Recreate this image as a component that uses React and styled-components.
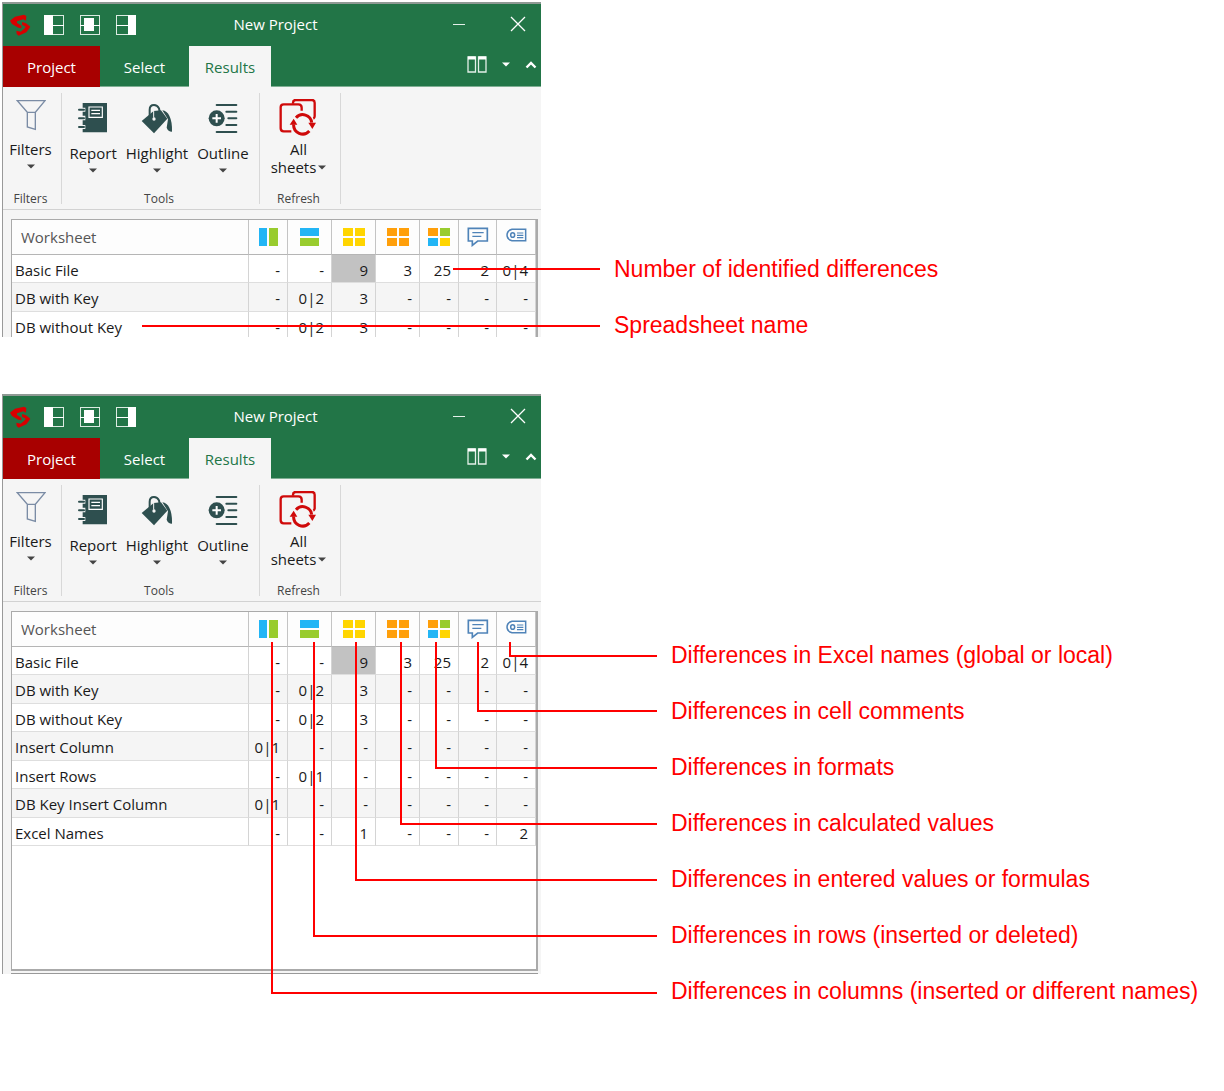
import React from 'react'
import styled, { createGlobalStyle } from 'styled-components'

const KINDS = ['columns', 'rows', 'entered values', 'calculated values', 'formats', 'comments', 'names']

const SHEETS = [
  { name: 'Basic File', values: ['-', '-', '9', '3', '25', '2', '0|4'], selected: 2 },
  { name: 'DB with Key', values: ['-', '0|2', '3', '-', '-', '-', '-'] },
  { name: 'DB without Key', values: ['-', '0|2', '3', '-', '-', '-', '-'] },
  { name: 'Insert Column', values: ['0|1', '-', '-', '-', '-', '-', '-'] },
  { name: 'Insert Rows', values: ['-', '0|1', '-', '-', '-', '-', '-'] },
  { name: 'DB Key Insert Column', values: ['0|1', '-', '-', '-', '-', '-', '-'] },
  { name: 'Excel Names', values: ['-', '-', '1', '-', '-', '-', '2'] }
]

const OVERVIEW = {
  labels: ['Number of identified differences', 'Spreadsheet name'],
  lines: ['M451 267H598', 'M140 324H598']
}

const DETAILS = {
  labels: [
    'Differences in Excel names (global or local)',
    'Differences in cell comments',
    'Differences in formats',
    'Differences in calculated values',
    'Differences in entered values or formulas',
    'Differences in rows (inserted or deleted)',
    'Differences in columns (inserted or different names)'
  ],
  lines: [
    'M508 248V262H655',
    'M476 248V317H655',
    'M434 248V374H655',
    'M399 248V430H655',
    'M354 248V486H655',
    'M312 248V542H655',
    'M270 248V599H655'
  ]
}

// icons

const Logo = () => (
  <svg width="21" height="22" viewBox="30 42 63 66" fill="#d80000">
    <path d="M30 62L45 50L72 44L79 48L78 62L70 58L51 64L51 69L64 77L64 85L55 83L36 72Z" />
    <path d="M66 66L78 70L91 80L88 85L79 97L56 107L50 102L49 92L62 95L72 87L77 80L66 74Z" />
  </svg>
)

const PaneIcon = ({ side }) => (
  <svg width="20" height="20" fill="#fff">
    <rect x="0.5" y="0.5" width="19" height="19" fill="none" stroke="#dcebe2" />
    {side === 'left' && <path d="M0 0H9V20H0ZM9 10H20V11H9Z" />}
    {side === 'center' && <path d="M4 3H14V16H4ZM0 10H20V11H0Z" />}
    {side === 'right' && <path d="M12 0H20V20H12ZM0 10H12V11H0Z" />}
  </svg>
)

const MinimizeIcon = () => (
  <svg width="14" height="14" stroke="#e4f0e9"><path d="M1 7.500H13" /></svg>
)

const CloseIcon = () => (
  <svg width="16" height="16" stroke="#fff" strokeWidth="1.3"><path d="M1 1L15 15M15 1L1 15" /></svg>
)

const SplitIcon = () => (
  <svg width="20" height="18" fill="none" stroke="#e4f0e9" strokeWidth="1.3">
    <path d="M1 1H8.500V16H1ZM11.500 1H19V16H11.500Z" />
    <path d="M1 2H8.500M11.500 2H19" stroke="#fff" strokeWidth="3" />
  </svg>
)

const ChevronIcon = () => (
  <svg width="12" height="9" fill="none" stroke="#fff" strokeWidth="2.4"><path d="M1.500 7.500L6 3L10.500 7.500" /></svg>
)

const Arrow = ({ color = '#444' }) => (
  <svg width="8" height="5" fill={color}><path d="M0 0.500H8L4 4.500Z" /></svg>
)

const FunnelIcon = () => (
  <svg width="30" height="32" viewBox="48 42 90 96" fill="none" stroke="#7b8ca5" strokeWidth="4">
    <path d="M52 47H135L106 82V133L82 126V82ZM82 82H106" />
  </svg>
)

const ReportIcon = () => (
  <svg width="30" height="30" viewBox="238 56 90 90">
    <path d="M252 56H325V144H252V134H260V122H252V108H260V94H252V82H260V70H252Z" fill="#2e4f4f" />
    <path d="M241 76H256M241 102H256M241 128H256" stroke="#2e4f4f" strokeWidth="6" strokeLinecap="round" />
    <path d="M271 68H311V99H271Z" fill="#2e4f4f" stroke="#fff" strokeWidth="3.500" />
    <path d="M278 78H304M278 88H304" stroke="#fff" strokeWidth="4" />
  </svg>
)

const BucketIcon = () => (
  <svg width="32" height="31" viewBox="424 54 96 93">
    <path d="M462 78L484 76L503 101L463 145L426 108Z" fill="#2e4f4f" />
    <path d="M450 98V74Q450 60 463 60Q473 60 478 70L482 92" fill="none" stroke="#2e4f4f" strokeWidth="6" />
    <path d="M462 78V98" stroke="#f5f5f5" strokeWidth="3" />
    <circle cx="463" cy="102" r="5" fill="#f5f5f5" />
    <path d="M488 76Q502 78 509 92Q518 110 517 140Q505 140 501 128L505 103Z" fill="#2e4f4f" />
  </svg>
)

const OutlineIcon = () => (
  <svg width="30" height="31" viewBox="624 54 90 93" fill="none" stroke="#2e4f4f" strokeWidth="6" strokeLinecap="round">
    <path d="M650 60H709M679 80H709M685 100H709M679 120H709M650 141H709" />
    <circle cx="650" cy="100" r="24" fill="#2e4f4f" stroke="none" />
    <path d="M650 87V113M637 100H663" stroke="#fff" strokeWidth="6" strokeLinecap="butt" />
  </svg>
)

const SheetsIcon = () => (
  <svg width="38" height="38" viewBox="100 42 114 114" fill="none" stroke="#cf0a0a" strokeWidth="7">
    <path d="M137 139H114Q105 139 105 130V67Q105 58 114 58H158Q168 58 168 68V77" />
    <path d="M142 56V53Q142 45 150 45H199Q207 45 207 53V94Q207 99 203 101" />
    <path d="M151 98A27 27 0 0 1 198 113M191 138A27 27 0 0 1 144 118" strokeWidth="9" />
    <path d="M188 113H211L200 132ZM132 119H155L144 101Z" fill="#cf0a0a" stroke="none" />
  </svg>
)

const SWATCHES = {
  'entered values': ['#ffd500', '#ffd500', '#ffd500', '#ffd500'],
  'calculated values': ['#ff9f0a', '#ff9f0a', '#ff9f0a', '#ff9f0a'],
  formats: ['#ff9f0a', '#99cc2e', '#22b5f5', '#ffd500']
}

const KindIcon = ({ kind }) => {
  if (kind === 'columns') {
    return (
      <svg width="19" height="18" role="img" aria-label={kind}>
        <path d="M0 0H8V18H0Z" fill="#22b5f5" />
        <path d="M10 0H19V18H10Z" fill="#99cc2e" />
      </svg>
    )
  }
  if (kind === 'rows') {
    return (
      <svg width="19" height="18" role="img" aria-label={kind}>
        <path d="M0 0H19V8H0Z" fill="#22b5f5" />
        <path d="M0 10H19V18H0Z" fill="#99cc2e" />
      </svg>
    )
  }
  if (kind === 'comments') {
    return (
      <svg width="22" height="20" viewBox="0 0 66 60" fill="none" stroke="#4f83b8" strokeWidth="5" role="img" aria-label={kind}>
        <path d="M4 4H61V42H32L16 55V42H4Z" />
        <path d="M16 17H50M16 28H43" strokeWidth="4" />
      </svg>
    )
  }
  if (kind === 'names') {
    return (
      <svg width="21" height="18" viewBox="0 0 63 54" fill="none" stroke="#4f83b8" strokeWidth="4.500" role="img" aria-label={kind}>
        <path d="M18 4H59V38H18Q3 34 3 21Q3 8 18 4Z" />
        <ellipse cx="20" cy="21" rx="6" ry="7" />
        <path d="M33 15H52M33 22H52M33 29H52" strokeWidth="3.500" />
      </svg>
    )
  }
  const [a, b, c, d] = SWATCHES[kind]
  return (
    <svg width="22" height="18" role="img" aria-label={kind}>
      <path d="M0 0H10V8H0Z" fill={a} />
      <path d="M12 0H22V8H12Z" fill={b} />
      <path d="M0 10H10V18H0Z" fill={c} />
      <path d="M12 10H22V18H12Z" fill={d} />
    </svg>
  )
}

// parts of the program window

const TitleBar = () => (
  <Title>
    <QuickAccess>
      <Logo />
      <IconButton aria-label="Left pane"><PaneIcon side="left" /></IconButton>
      <IconButton aria-label="Center pane"><PaneIcon side="center" /></IconButton>
      <IconButton aria-label="Right pane"><PaneIcon side="right" /></IconButton>
    </QuickAccess>
    <span>New Project</span>
    <WindowButtons>
      <WindowButton aria-label="Minimize"><MinimizeIcon /></WindowButton>
      <WindowButton aria-label="Close"><CloseIcon /></WindowButton>
    </WindowButtons>
  </Title>
)

const TabBar = () => (
  <Tabs>
    <ProjectTab>Project</ProjectTab>
    <Tab>Select</Tab>
    <ActiveTab>Results</ActiveTab>
    <TabTools>
      <IconButton aria-label="Arrange windows"><SplitIcon /></IconButton>
      <IconButton aria-label="More"><Arrow color="#fff" /></IconButton>
      <IconButton aria-label="Collapse ribbon"><ChevronIcon /></IconButton>
    </TabTools>
  </Tabs>
)

const RibbonBar = () => (
  <Ribbon>
    <Group $width="59px">
      <Tools>
        <Tool><LargeIcon><FunnelIcon /></LargeIcon>Filters<Arrow /></Tool>
      </Tools>
      <GroupName>Filters</GroupName>
    </Group>
    <Group $width="198px">
      <Tools>
        <Tool><SmallIcon><ReportIcon /></SmallIcon>Report<Arrow /></Tool>
        <Tool><SmallIcon><BucketIcon /></SmallIcon>Highlight<Arrow /></Tool>
        <Tool><SmallIcon><OutlineIcon /></SmallIcon>Outline<Arrow /></Tool>
      </Tools>
      <GroupName>Tools</GroupName>
    </Group>
    <Group $width="81px">
      <Tools>
        <Tool>
          <LargeIcon><SheetsIcon /></LargeIcon>
          All
          <Inline>sheets<Arrow /></Inline>
        </Tool>
      </Tools>
      <GroupName>Refresh</GroupName>
    </Group>
  </Ribbon>
)

const Results = ({ sheets }) => (
  <Table>
    <colgroup>
      <col />
      <Col $width="39px" />
      <Col $width="44px" />
      <Col $width="44px" />
      <Col $width="44px" />
      <Col $width="39px" />
      <Col $width="38px" />
      <Col $width="39px" />
    </colgroup>
    <thead>
      <tr>
        <NameHead>Worksheet</NameHead>
        {KINDS.map(kind => <Head key={kind}><KindIcon kind={kind} /></Head>)}
      </tr>
    </thead>
    <tbody>
      {sheets.map(sheet => (
        <Row key={sheet.name}>
          <Name>{sheet.name}</Name>
          {sheet.values.map((value, i) => (
            <Value key={i} $selected={sheet.selected === i}>{value}</Value>
          ))}
        </Row>
      ))}
    </tbody>
  </Table>
)

const Figure = ({ labels, lines, cropped, indent, top }) => (
  <FigureBox>
    <Window $cropped={cropped}>
      <TitleBar />
      <TabBar />
      <RibbonBar />
      <Body>
        <Pane>
          <Sheet>
            <Results sheets={cropped ? SHEETS.slice(0, 3) : SHEETS} />
          </Sheet>
        </Pane>
      </Body>
    </Window>
    <Labels $indent={indent} $top={top}>
      {labels.map(label => <Label key={label}>{label}</Label>)}
    </Labels>
    <Lines>
      {lines.map(d => <path key={d} d={d} />)}
    </Lines>
  </FigureBox>
)

const App = () => (
  <Page>
    <GlobalStyle />
    <Figure {...OVERVIEW} cropped indent="73px" top="239px" />
    <Figure {...DETAILS} indent="130px" top="233px" />
  </Page>
)

const GlobalStyle = createGlobalStyle`
  * {
    box-sizing: border-box;
  }

  body {
    margin: 0;
    background: #fff;
  }

  svg {
    display: block;
    flex: none;
  }
`

const Page = styled.main`
  display: flex;
  flex-direction: column;
  gap: 41px;
  padding: 2px 0 0 2px;
`

const FigureBox = styled.section`
  position: relative;
  display: flex;
  align-items: flex-start;
`

const Window = styled.div`
  flex: 0 0 539px;
  height: ${props => props.$cropped ? '335px' : 'auto'};
  overflow: hidden;
  border-top: 2px solid #8f9a94;
  border-left: 1px solid #999;
  background: #f5f5f5;
  color: #1a1a1a;
  font-family: 'Open Sans', 'Noto Sans', sans-serif;
  font-size: 15px;
  line-height: 18px;
`

const Title = styled.header`
  display: grid;
  grid-template-columns: 1fr auto 1fr;
  align-items: center;
  height: 42px;
  padding: 0 0 3px 7px;
  background: #227547;
  color: #fff;
`

const QuickAccess = styled.div`
  display: flex;
  align-items: center;
  gap: 16px;
  padding-top: 2px;

  > svg {
    margin-right: -3px;
  }
`

const IconButton = styled.button`
  display: flex;
  padding: 0;
  border: 0;
  background: none;
`

const WindowButtons = styled.div`
  display: flex;
  align-items: center;
  justify-content: flex-end;
  gap: 13px;
`

const WindowButton = styled(IconButton)`
  justify-content: center;
  width: 46px;
`

const Tabs = styled.nav`
  display: flex;
  height: 41px;
  background: #227547;
`

const Tab = styled.button`
  width: 89px;
  padding: 2px 0 0;
  border: 0;
  border-bottom: 1px solid #7fae93;
  background: none;
  color: #fff;
  font: inherit;
`

const ProjectTab = styled(Tab)`
  width: 97px;
  border-color: #a80000;
  background: #a80000;
`

const ActiveTab = styled(Tab)`
  width: 82px;
  border-color: #f5f5f5;
  background: #f5f5f5;
  color: #227547;
`

const TabTools = styled.div`
  display: flex;
  flex: 1;
  align-items: center;
  justify-content: flex-end;
  gap: 15px;
  padding: 0 4px 3px 0;
  border-bottom: 1px solid #7fae93;
`

const Ribbon = styled.div`
  display: flex;
  height: 123px;
  padding: 6px 0 5px;
  border-bottom: 1px solid #d2d2d2;
`

const Group = styled.div`
  display: flex;
  flex-direction: column;
  justify-content: space-between;
  width: ${props => props.$width};
  padding-right: 3px;
  border-right: 1px solid #d8d8d8;
`

const Tools = styled.div`
  display: flex;
  justify-content: center;
  gap: 9px;
`

const Tool = styled.button`
  display: flex;
  flex-direction: column;
  align-items: center;
  padding: 6px 0 0;
  border: 0;
  background: none;
  color: inherit;
  font: inherit;

  > svg {
    margin-top: 6px;
  }
`

const LargeIcon = styled.span`
  display: flex;
  height: 41px;
`

const SmallIcon = styled.span`
  display: flex;
  height: 45px;
  padding-top: 4px;
`

const Inline = styled.span`
  display: flex;
  align-items: center;
  gap: 2px;
`

const GroupName = styled.span`
  color: #444;
  font-size: 12px;
  line-height: 10px;
  text-align: center;
`

const Body = styled.div`
  padding: 9px 3px 0 8px;
`

const Pane = styled.div`
  padding-bottom: 2px;
  border-bottom: 1px solid #999;
`

const Sheet = styled.div`
  min-height: 360px;
  border: 1px solid #aaa;
  border-width: 1px 2px 2px 1px;
  background: #fff;
`

const Table = styled.table`
  width: 100%;
  border-spacing: 0;
  table-layout: fixed;
`

const Col = styled.col`
  width: ${props => props.$width};
`

const Head = styled.th`
  height: 35px;
  padding: 0;
  border-right: 1px solid #c4c4c4;
  border-bottom: 1px solid #b5b5b5;
  background: #fdfdfd;

  svg {
    margin: 0 auto;
  }
`

const NameHead = styled(Head)`
  padding-left: 9px;
  color: #555;
  font-weight: 400;
  text-align: left;
`

const Row = styled.tr`
  height: 28px;

  &:nth-child(even) {
    height: 29px;
    background: #f5f5f5;
  }
`

const Name = styled.td`
  padding: 2px 0 0 3px;
  border-right: 1px solid #d4d4d4;
  border-bottom: 1px solid #dedede;
`

const Value = styled(Name)`
  padding: 2px 7px 0 0;
  background: ${props => props.$selected ? '#c2c2c2' : 'none'};
  text-align: right;
`

const Labels = styled.ul`
  margin: ${props => props.$top} 0 0 ${props => props.$indent};
  padding: 0;
  list-style: none;
`

const Label = styled.li`
  height: 56px;
  color: #f00;
  font-family: 'Liberation Sans', Arial, sans-serif;
  font-size: 23px;
  line-height: 56px;
  white-space: nowrap;
`

const Lines = styled.svg`
  position: absolute;
  top: 0;
  left: 0;
  width: 100%;
  height: 100%;
  overflow: visible;
  fill: none;
  stroke: #f00;
  stroke-width: 2px;
  pointer-events: none;
`

export default App
